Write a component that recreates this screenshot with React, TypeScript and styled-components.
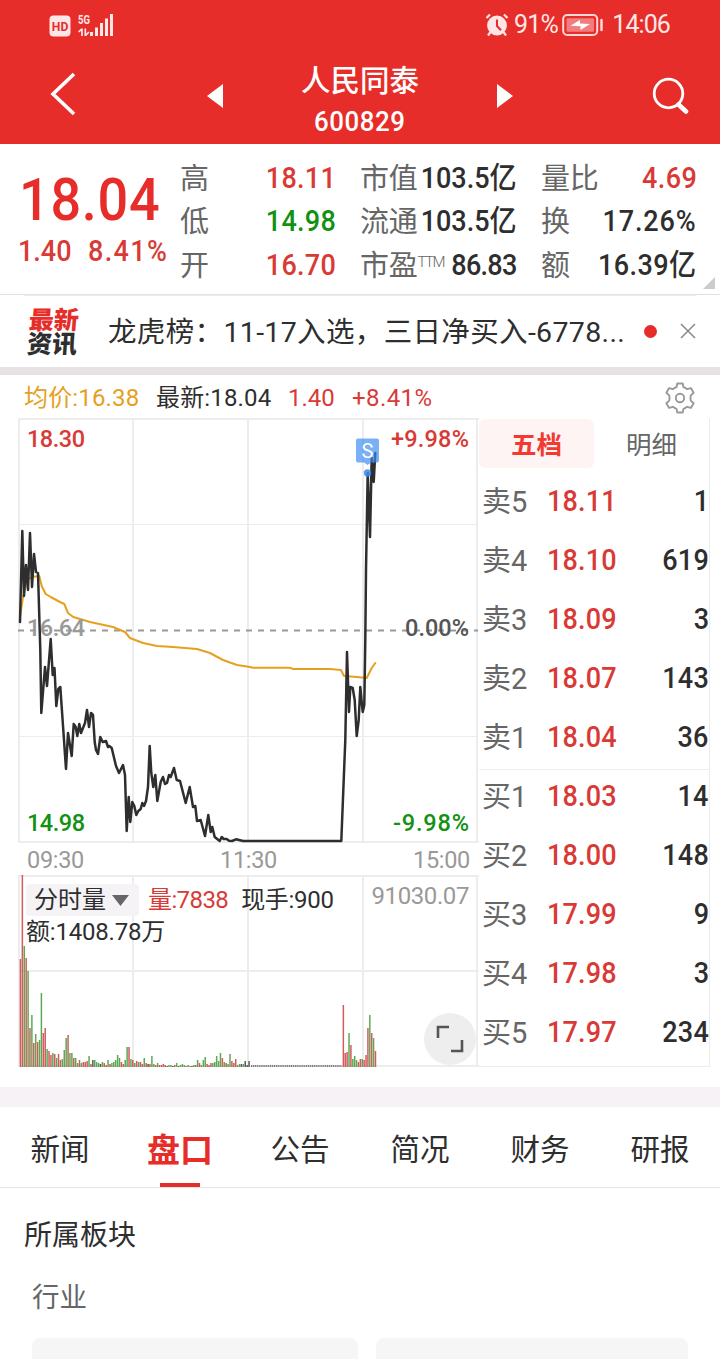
import React from "react";
import styled, { createGlobalStyle } from "styled-components";

const RED = "#e62d2a";
const UP = "#d93a36";
const DOWN = "#129112";
const INK = "#2e2e2e";
const MUTED = "#666";
const FONT = `Roboto, "Noto Sans CJK SC", sans-serif`;

const GlobalStyle = createGlobalStyle`
  * { box-sizing: border-box; }
  body { margin: 0; background: #fff; }
`;

const Page = styled.div`
  width: 720px;
  height: 1359px;
  overflow: hidden;
  display: flex;
  flex-direction: column;
  background: #fff;
  color: ${INK};
  font-family: ${FONT};
  white-space: nowrap;
`;

const Header = styled.header`
  height: 144px;
  flex: none;
  background: ${RED};
  color: #fff;
`;

const StatusBar = styled.div`
  height: 48px;
  padding: 1px 50px 0 49px;
  display: flex;
  justify-content: space-between;
  align-items: center;
`;

const StatusGroup = styled.div`
  display: flex;
  align-items: center;
`;

const StatusText = styled.span<{ $ls?: number; $ml?: number; $mr?: number }>`
  font-size: 25px;
  line-height: 30px;
  color: #ffe6e6;
  letter-spacing: ${(p) => p.$ls ?? 0}px;
  margin-left: ${(p) => p.$ml ?? 0}px;
  margin-right: ${(p) => p.$mr ?? 0}px;
`;

const NavBar = styled.div`
  height: 96px;
  display: flex;
  align-items: center;
  padding: 0 31px 0 50px;
`;

const BackIcon = styled.svg`
  margin-bottom: 4px;
`;

const NavTitle = styled.div`
  flex: 1;
  display: flex;
  justify-content: space-between;
  align-items: center;
  margin: 0 139px 0 131px;
`;

const TitleBlock = styled.div`
  display: flex;
  flex-direction: column;
  align-items: center;
  padding-top: 9px;
`;

const StockName = styled.div`
  font-size: 29.5px;
  font-weight: 500;
  line-height: 43px;
`;

const StockCode = styled.div`
  font-size: 27.5px;
  font-weight: 500;
  line-height: 38px;
  letter-spacing: 0.6px;
  transform: scaleX(0.94);
`;

const Quote = styled.section`
  height: 151px;
  flex: none;
  display: flex;
  border-bottom: 1px solid #e2e2e2;
  position: relative;
`;

const LastPrice = styled.div`
  width: 180px;
  padding: 21px 0 0 18px;
  color: ${RED};
`;

/* Roboto figures condensed to the narrow proportions of a ticker face. */
const Figure = styled.span<{ $color?: string; $ls?: number; $origin?: "left" | "right" }>`
  display: inline-block;
  font-weight: 500;
  color: ${(p) => p.$color ?? "inherit"};
  letter-spacing: ${(p) => p.$ls ?? 0}px;
  transform: scaleX(0.9);
  transform-origin: ${(p) => p.$origin ?? "left"} center;
`;

const BigPrice = styled.div`
  font-size: 60px;
  line-height: 70px;
  padding-left: 1px;
`;

const Change = styled.div`
  display: grid;
  grid-template-columns: 70px auto;
  justify-content: start;
  font-size: 30px;
  line-height: 32px;
  color: ${UP};
`;

const QuoteGrid = styled.div`
  display: grid;
  grid-template-columns: 156px 157px 156px;
  grid-auto-rows: 43.5px;
  column-gap: 24px;
  padding-top: 12px;
`;

const QuoteCell = styled.div`
  display: flex;
  align-items: center;
  justify-content: space-between;
  font-size: 30px;
  line-height: 40px;
`;

const QuoteLabel = styled.span`
  font-size: 29px;
  color: ${MUTED};
  padding-top: 2px;
  margin-right: -20px;
  letter-spacing: -0.3px;
`;

const Ttm = styled.sup`
  font-size: 15px;
  line-height: 10px;
  font-weight: 300;
  letter-spacing: -1.5px;
  vertical-align: 9px;
`;

const Corner = styled.svg`
  position: absolute;
  right: 5px;
  bottom: 5px;
`;

const News = styled.section`
  height: 72px;
  flex: none;
  margin: 0 24px;
  border-top: 1px solid #ebebeb;
  display: flex;
  align-items: center;
`;

const NewsLogo = styled.div`
  width: 54px;
  margin-left: 4px;
  font-size: 25px;
  font-weight: 900;
  line-height: 23.5px;
  padding-top: 1px;
  transform: skewX(-4deg);
`;

const NewsRed = styled.div`
  color: ${RED};
`;

const NewsText = styled.div`
  margin-left: 26px;
  width: 521px;
  font-size: 28.5px;
  line-height: 40px;
  letter-spacing: 0.35px;
  padding-top: 3px;
`;

const NewsDot = styled.span`
  width: 13px;
  height: 13px;
  border-radius: 50%;
  background: ${RED};
  margin: 0 23px 1px 15px;
  flex: none;
`;

const CloseIcon = styled.svg`
  margin-bottom: 1px;
`;

const Gap = styled.div<{ $h: number; $color: string }>`
  flex: none;
  height: ${(p) => p.$h}px;
  background: ${(p) => p.$color};
`;

const Legend = styled.div`
  height: 43px;
  flex: none;
  display: flex;
  align-items: center;
  padding: 2px 24px 0 24px;
  font-size: 24px;
  line-height: 32px;
`;

const LegendItem = styled.span<{ $color?: string; $w: number; $ls?: number }>`
  width: ${(p) => p.$w}px;
  color: ${(p) => p.$color ?? INK};
  letter-spacing: ${(p) => p.$ls ?? 0}px;
`;

const Gear = styled.svg`
  margin-left: auto;
`;

const Market = styled.section`
  height: 669px;
  flex: none;
  display: flex;
  padding-left: 18px;
`;

const Charts = styled.div`
  width: 461px;
`;

const Drawing = styled.svg`
  display: block;
  font-family: ${FONT};
`;

const TimeAxis = styled.div`
  height: 32px;
  display: flex;
  justify-content: space-between;
  align-items: center;
  padding: 1px 9px 0 9px;
  font-size: 23.5px;
  letter-spacing: -0.3px;
  color: #999;
`;

const VolumePanel = styled.div`
  position: relative;
`;

const VolumeInfo = styled.div`
  position: absolute;
  left: 8px;
  top: 9px;
  right: 10px;
  font-size: 24px;
`;

const VolumeRow = styled.div`
  display: flex;
  align-items: center;
  height: 32px;
  line-height: 34px;
`;

const IndicatorButton = styled.button`
  width: 113px;
  height: 32px;
  padding: 0 0 0 8px;
  border: 0;
  border-radius: 4px;
  background: #f6f3f6;
  display: flex;
  align-items: center;
  gap: 6px;
  font: 24px/34px ${FONT};
  color: ${INK};
`;

const VolumeText = styled.span<{ $color?: string; $ml?: number; $ls?: number }>`
  color: ${(p) => p.$color ?? INK};
  margin-left: ${(p) => p.$ml ?? 0}px;
  letter-spacing: ${(p) => p.$ls ?? 0}px;
`;

const VolumeMax = styled.span`
  margin-left: auto;
  margin-top: -8px;
  color: #999;
  letter-spacing: -0.4px;
`;

const Expand = styled.button`
  position: absolute;
  right: 3px;
  bottom: 2px;
  width: 52px;
  height: 52px;
  padding: 0;
  border: 0;
  border-radius: 50%;
  background: #eee;
`;

const Book = styled.div`
  width: 231px;
  height: 649px;
  border-right: 1px solid #ececec;
  border-bottom: 1px solid #ececec;
`;

const BookTabs = styled.div`
  display: flex;
  height: 57px;
  padding-top: 1px;
`;

const BookTab = styled.div<{ $active?: boolean }>`
  width: 115px;
  height: 49px;
  border-radius: 6px;
  text-align: center;
  line-height: 52px;
  font-size: 25.5px;
  font-weight: ${(p) => (p.$active ? 700 : 400)};
  color: ${(p) => (p.$active ? "#f03a32" : MUTED)};
  background: ${(p) => (p.$active ? "#fff4f4" : "transparent")};
`;

const BookSide = styled.div`
  & + & {
    margin-top: -1px;
    border-top: 1px solid #eee;
  }
`;

const BookRow = styled.div`
  height: 59px;
  padding: 0 0 8px 3px;
  display: flex;
  align-items: center;
  font-size: 30px;
  line-height: 40px;
`;

const Level = styled.span`
  width: 65px;
  font-size: 29px;
  padding-top: 2px;
  color: ${MUTED};
`;

const Lots = styled.span`
  margin-left: auto;
`;

const Tabs = styled.nav`
  height: 81px;
  flex: none;
  display: flex;
  border-bottom: 1px solid #e6e6e6;
`;

const Tab = styled.div<{ $active?: boolean }>`
  flex: 1;
  height: 80px;
  display: flex;
  flex-direction: column;
  align-items: center;
  font-size: ${(p) => (p.$active ? 33 : 29.5)}px;
  font-weight: ${(p) => (p.$active ? 700 : 400)};
  line-height: 76px;
  padding-top: ${(p) => (p.$active ? 6 : 5)}px;
  color: ${(p) => (p.$active ? RED : INK)};
  &::after {
    content: "";
    width: 40px;
    height: 4px;
    margin-top: -6px;
    flex: none;
    background: ${(p) => (p.$active ? RED : "transparent")};
  }
`;

const Sector = styled.section`
  padding: 28px 24px 0;
`;

const SectorTitle = styled.h2`
  margin: 0;
  font-size: 28px;
  font-weight: 400;
  line-height: 40px;
`;

const SectorLabel = styled.div`
  margin: 22px 0 0 8px;
  font-size: 27.5px;
  line-height: 40px;
  color: ${MUTED};
`;

const SectorCards = styled.div`
  display: grid;
  grid-template-columns: 326px 312px;
  gap: 18px;
  margin: 20px 0 0 8px;
`;

const SectorCard = styled.div`
  height: 60px;
  border-radius: 8px;
  background: #f6f6f6;
`;

type QuoteItem = { label: string; value: string; color?: string; ls?: number; ttm?: boolean };

const quotes: QuoteItem[] = [
  { label: "高", value: "18.11", color: UP, ls: 0.3 },
  { label: "市值", value: "103.5亿" },
  { label: "量比", value: "4.69", color: UP, ls: 0.4 },
  { label: "低", value: "14.98", color: DOWN, ls: 0.3 },
  { label: "流通", value: "103.5亿" },
  { label: "换", value: "17.26%", ls: 1 },
  { label: "开", value: "16.70", color: UP, ls: 0.3 },
  { label: "市盈", value: "86.83", ls: -0.8, ttm: true },
  { label: "额", value: "16.39亿", ls: 0.5 },
];

const asks = [
  ["卖5", "18.11", "1"],
  ["卖4", "18.10", "619"],
  ["卖3", "18.09", "3"],
  ["卖2", "18.07", "143"],
  ["卖1", "18.04", "36"],
];
const bids = [
  ["买1", "18.03", "14"],
  ["买2", "18.00", "148"],
  ["买3", "17.99", "9"],
  ["买4", "17.98", "3"],
  ["买5", "17.97", "234"],
];

const pricePoints =
  "20,622 22.3,531 24,596 26,565 28,590 30,533 32,587 34,554 36,572 38,573 40.3,650 41.3,713 45,667 47,686 50.7,639 52.7,675 54.5,668 56.3,706 58.3,689 60.3,687 61.7,707 66,769 68,733 71.7,756 73.7,724 75.7,727 77.3,736 79.3,724 81,733 85,723 87,710 89,727 91,713 93,715 94.7,742 96,750 98,754 100.3,737 102.7,742 106,741 108,747 109.3,746 111.7,748 116,766 119,773 123,765 125,775 126.7,831 128.7,797 130.3,822 132.3,802 134.3,806 136.3,815 138.3,811 140.7,809 142.3,803 144,806 146,801 148,787 149.7,746 151.3,773 153.3,787 155.3,775 157.3,801 160.7,782 163,777 165,784 167,783 169,775 170.7,777 174,768 176.7,780 180,781 185.7,803 189.7,787 193,807 195.3,806 197,821 200.7,820 205,836 208.3,815 210.7,832 212.3,827 214.7,837 219.7,841 221.7,837 223.7,839 226.7,839 229,840.7 232,841 236,839.3 243,841 341.3,841 345.3,740 347,652 349,712 350.3,687 352.7,688 354.7,700 356.7,736 358.7,720 360.3,687 362.7,712 364.3,705 365.3,640 366,570 367.7,473 370,537 371.7,458 373.7,482 375.3,453";

const averagePoints =
  "20,617 23,597 27,580 32,577 39.3,576 41.7,586 45.7,594 50.7,597 60,602 64.3,604 68,613 73.3,617 90,622 113,627 125,632 130,638 143,643 157,646 173,647 197,649 210,653 223,660 237,665 250,667 253,667.7 290,667.7 293,669 330,669 341,670 344,676 357,677 366.7,678 371.7,668 375.3,663";

// Bar heights in px, each with its direction: r (up), g (down), k (flat).
const morningVolume =
  "108r 192r 121g 109r 96g 39r 52g 24r 33g 25r 27g 74g 34r 39r 18g 16r 12r 14g 13r 9g 13r 7r 8g 17g 29g 32r 14g 14g 9r 9g 4g 7r 4g 5r 5r 6r 11g 3r 7k 7g 5g 4g 3k 5g 4r 2r 7g 3r 4g 5g 7g 12g 9g 5r 3r 7g 20g 20r 8g 7r 4g 6r 5g 5r 3r 9g 4r 3k 3r 11g 3g 2r 4g 2r 2r 3r 2r 1k 2g 2g 1k 2r 4g 1k 2g 3g 2g 1r 2g 1r 1k 2g 2r 7g 4r 2g 7g 10g 3r 2r 4r 4g 5g 11g 6g 14g 9r 5g 4r 3g 13g 6r 4r 8r 2g 3g 3k 3g 6k 2k 6k";
const afternoonVolume = "62r 14r 15r 34g 22r 8g 11g 7g 5r 8r 8g 7r 12r 39r 52g 34r 29g 16r";
const tone: Record<string, string> = { r: "#cc4444", g: "#489c3e", k: "#444" };

const VolumeBars = ({ data, x, step }: { data: string; x: number; step: number }) => (
  <>
    {data.split(" ").map((item, i) => {
      const h = parseInt(item, 10);
      return (
        <rect
          key={i}
          x={x + i * step - 0.7}
          y={1067 - h}
          width={1.5}
          height={h}
          fill={tone[item.slice(-1)]}
          opacity={0.88}
        />
      );
    })}
  </>
);

const PriceChart = () => (
  <Drawing width="461" height="425" viewBox="18 418 461 425">
    <g stroke="#ededed" strokeWidth="2" fill="none">
      <path d="M19 418V843M133 418V843M248 418V843M363 418V843M477 418V843M18 419H479M18 842H479" />
      <path d="M18 524.500H478M18 736.500H478" strokeWidth="1.200" />
    </g>
    <path d="M18 630.500H478" stroke="#999" strokeWidth="1.800" strokeDasharray="6 6" />
    <polyline points={averagePoints} fill="none" stroke="#e5a020" strokeWidth="2" strokeLinejoin="round" strokeLinecap="round" />
    <polyline points={pricePoints} fill="none" stroke={INK} strokeWidth="2.500" strokeLinejoin="round" strokeLinecap="round" />
    <g fill="#3b8af0">
      <path
        d="M358 438.500h19a2 2 0 0 1 2 2v20a2 2 0 0 1-2 2h-6l-3.500 2.500-3.500-2.500h-6a2 2 0 0 1-2-2v-20a2 2 0 0 1 2-2z"
        opacity="0.680"
      />
      <circle cx="367.500" cy="473" r="3.700" opacity="0.850" />
    </g>
    <text x="361.500" y="458" fontSize="20" fill="#fff">S</text>
    <g fontSize="23.500" fontWeight="500">
      <text x="27" y="447" fill={UP} textLength="58">18.30</text>
      <text x="27" y="636" fill="#999" textLength="58">16.64</text>
      <text x="27" y="831" fill={DOWN} textLength="58">14.98</text>
      <text x="391" y="447" fill={UP} textLength="78">+9.98%</text>
      <text x="405" y="636" fill="#555" textLength="64">0.00%</text>
      <text x="393" y="831" fill={DOWN} textLength="76">-9.98%</text>
    </g>
  </Drawing>
);

const VolumeChart = () => (
  <Drawing width="461" height="192" viewBox="18 875 461 192">
    <path
      d="M19 875V1067M133 875V1067M248 875V1067M363 875V1067M477 875V1067M18 876H479M18 971H479M18 1066H479"
      stroke="#ededed"
      strokeWidth="2"
      fill="none"
    />
    <VolumeBars data={morningVolume} x={20.4} step={1.905} />
    <path d="M251 1066H342" stroke="#555" strokeWidth="1.500" strokeDasharray="1.200 0.700" />
    <VolumeBars data={afternoonVolume} x={343.3} step={1.89} />
  </Drawing>
);

const SignalIcon = () => (
  <svg width="66" height="28" viewBox="49 10 66 28">
    <rect x="49.500" y="14.500" width="21" height="21" rx="4" fill="#ffe6e6" />
    <text x="51.800" y="30" fontFamily="Roboto" fontWeight="700" fontSize="13" fill={RED} textLength="16.500" lengthAdjust="spacingAndGlyphs">HD</text>
    <text x="78" y="23" fontFamily="Roboto" fontWeight="700" fontSize="13" fill="#ffe6e6" textLength="12" lengthAdjust="spacingAndGlyphs">5G</text>
    <path d="M82 27.500V35M78.600 31l3.400-3.200M85.300 27.500V35M85.500 34.500l3.400-3.500" stroke="#ffe6e6" strokeWidth="1.700" fill="none" />
    <path d="M91.500 31v4M96.500 26.500v8.500M101.500 22v13M106.500 17.500v17.500M111.500 13v22" stroke="#ffe6e6" strokeWidth="3" />
  </svg>
);

const AlarmIcon = () => (
  <svg width="24" height="24" viewBox="0 0 24 24">
    <circle cx="12" cy="12.500" r="9.900" fill="#ffe6e6" />
    <path d="M1.500 5L5 1.500M22.500 5L19 1.500M5.500 19L3 22.500M18.500 19l2.500 3.500" stroke="#ffe6e6" strokeWidth="2.200" />
    <path d="M12 6.500V13l4 4.200" stroke={RED} strokeWidth="2" fill="none" />
  </svg>
);

const BatteryIcon = () => (
  <svg width="42" height="24" viewBox="0 0 42 24">
    <rect x="1.200" y="2" width="34" height="20" rx="4" fill="none" stroke="#ffd6d6" strokeWidth="2" />
    <rect x="4.500" y="5.300" width="27.500" height="13.500" rx="1" fill="#f27d7c" />
    <path d="M8.500 12.800l9.500-5.800v3.500l10 .5-9.500 6v-3.700z" fill="#fff" />
    <path d="M39.500 7v10" stroke="#ffe0e0" strokeWidth="2.400" strokeLinecap="round" />
  </svg>
);

const BookRows = ({ rows }: { rows: string[][] }) => (
  <BookSide>
    {rows.map(([level, price, lots]) => (
      <BookRow key={level}>
        <Level>{level}</Level>
        <Figure $color={UP} $ls={0.2}>{price}</Figure>
        <Lots>
          <Figure $origin="right" $ls={0.3}>{lots}</Figure>
        </Lots>
      </BookRow>
    ))}
  </BookSide>
);

export default function App() {
  return (
    <Page>
      <GlobalStyle />
      <Header>
        <StatusBar>
          <SignalIcon />
          <StatusGroup>
            <AlarmIcon />
            <StatusText $ml={5} $mr={4} $ls={-0.7}>91%</StatusText>
            <BatteryIcon />
            <StatusText $ml={8} $ls={-0.9}>14:06</StatusText>
          </StatusGroup>
        </StatusBar>
        <NavBar>
          <BackIcon width="26" height="44" viewBox="0 0 26 44">
            <path d="M24 2L3 22l21 20" fill="none" stroke="#fff" strokeWidth="3.600" />
          </BackIcon>
          <NavTitle>
            <svg width="16" height="24" viewBox="0 0 16 24">
              <path d="M16 0v24L0 12z" fill="#fff" />
            </svg>
            <TitleBlock>
              <StockName>人民同泰</StockName>
              <StockCode>600829</StockCode>
            </TitleBlock>
            <svg width="16" height="24" viewBox="0 0 16 24">
              <path d="M0 0v24l16-12z" fill="#fff" />
            </svg>
          </NavTitle>
          <svg width="37" height="38" viewBox="0 0 37 38">
            <circle cx="16.500" cy="16.500" r="14.300" fill="none" stroke="#fff" strokeWidth="2.800" />
            <path d="M26.500 27.500l7.500 7" stroke="#fff" strokeWidth="4.600" strokeLinecap="round" />
          </svg>
        </NavBar>
      </Header>

      <Quote>
        <LastPrice>
          <BigPrice>
            <Figure $ls={0.8}>18.04</Figure>
          </BigPrice>
          <Change>
            <Figure>1.40</Figure>
            <Figure $ls={1.5}>8.41%</Figure>
          </Change>
        </LastPrice>
        <QuoteGrid>
          {quotes.map((q) => (
            <QuoteCell key={q.label}>
              <QuoteLabel>
                {q.label}
                {q.ttm && <Ttm>TTM</Ttm>}
              </QuoteLabel>
              <Figure $origin="right" $color={q.color} $ls={q.ls}>{q.value}</Figure>
            </QuoteCell>
          ))}
        </QuoteGrid>
        <Corner width="12" height="12" viewBox="0 0 12 12">
          <path d="M12 0v12H0z" fill="#ccc" />
        </Corner>
      </Quote>

      <News>
        <NewsLogo>
          <NewsRed>最新</NewsRed>
          <div>资讯</div>
        </NewsLogo>
        <NewsText>龙虎榜：11-17入选，三日净买入-6778...</NewsText>
        <NewsDot />
        <CloseIcon width="16" height="16" viewBox="0 0 16 16">
          <path d="M1 1l14 14M15 1L1 15" stroke="#888" strokeWidth="1.500" />
        </CloseIcon>
      </News>

      <Gap $h={8} $color="#e5e1e4" />

      <Legend>
        <LegendItem $color="#e5a020" $w={132} $ls={0.15}>均价:16.38</LegendItem>
        <LegendItem $w={132} $ls={0.15}>最新:18.04</LegendItem>
        <LegendItem $color={UP} $w={64}>1.40</LegendItem>
        <LegendItem $color={UP} $w={90} $ls={0.4}>+8.41%</LegendItem>
        <Gear width="32" height="32" viewBox="0 0 32 32" fill="none" stroke="#999" strokeWidth="1.900" strokeLinejoin="round">
          <path d="M13.300 1.500h5.400l.8 3.700c1.400.4 2.600 1.100 3.700 2l3.700-1.100 2.700 4.600-2.800 2.700c-.5 1.700-.5 3.500 0 5.200l2.800 2.700-2.700 4.600-3.700-1.100c-1.100.9-2.300 1.600-3.700 2l-.8 3.700h-5.400l-.8-3.700c-1.400-.4-2.600-1.100-3.700-2l-3.700 1.100-2.700-4.600 2.800-2.700c.5-1.700.5-3.500 0-5.200l-2.800-2.700 2.700-4.600 3.700 1.100c1.100-.9 2.300-1.600 3.700-2z" />
          <circle cx="16" cy="16" r="4.200" />
        </Gear>
      </Legend>

      <Market>
        <Charts>
          <PriceChart />
          <TimeAxis>
            <span>09:30</span>
            <span>11:30</span>
            <span>15:00</span>
          </TimeAxis>
          <VolumePanel>
            <VolumeChart />
            <VolumeInfo>
              <VolumeRow>
                <IndicatorButton>
                  分时量
                  <svg width="17" height="11" viewBox="0 0 17 11">
                    <path d="M0 0h17L8.500 11z" fill="#666" />
                  </svg>
                </IndicatorButton>
                <VolumeText $color={UP} $ml={9} $ls={-0.6}>量:7838</VolumeText>
                <VolumeText $ml={13} $ls={-0.3}>现手:900</VolumeText>
                <VolumeMax>91030.07</VolumeMax>
              </VolumeRow>
              <VolumeRow>
                <VolumeText $ls={-0.2}>额:1408.78万</VolumeText>
              </VolumeRow>
            </VolumeInfo>
            <Expand aria-label="全屏">
              <svg width="52" height="52" viewBox="0 0 52 52" fill="none" stroke="#555" strokeWidth="2.600">
                <path d="M14 25V14h11M38 27v11H27" />
              </svg>
            </Expand>
          </VolumePanel>
        </Charts>
        <Book>
          <BookTabs>
            <BookTab $active>五档</BookTab>
            <BookTab>明细</BookTab>
          </BookTabs>
          <BookRows rows={asks} />
          <BookRows rows={bids} />
        </Book>
      </Market>

      <Gap $h={20} $color="#f6f2f5" />

      <Tabs>
        <Tab>新闻</Tab>
        <Tab $active>盘口</Tab>
        <Tab>公告</Tab>
        <Tab>简况</Tab>
        <Tab>财务</Tab>
        <Tab>研报</Tab>
      </Tabs>

      <Sector>
        <SectorTitle>所属板块</SectorTitle>
        <SectorLabel>行业</SectorLabel>
        <SectorCards>
          <SectorCard />
          <SectorCard />
        </SectorCards>
      </Sector>
    </Page>
  );
}
